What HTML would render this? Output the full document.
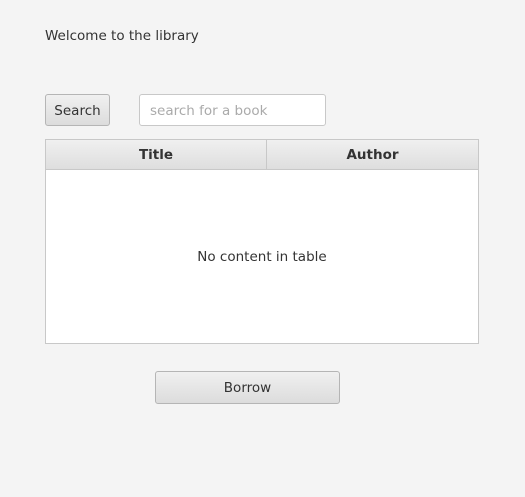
<!DOCTYPE html>
<html><head><style>
body{margin:0;width:525px;height:497px;background:#f4f4f4;font-family:"DejaVu Sans","Liberation Sans",sans-serif;font-size:13.5px;color:#333;position:relative;overflow:hidden}
.a{position:absolute}
.btn{box-sizing:border-box;border:1px solid #b5b5b5;border-radius:3px;background:linear-gradient(#f0f0f0,#dcdcdc);text-align:center;color:#333}
</style></head><body>
<div class="a" style="left:45px;top:28px">Welcome to the library</div>
<div class="a btn" style="left:45px;top:94px;width:65px;height:32px;line-height:32px">Search</div>
<div class="a" style="left:139px;top:94px;width:187px;height:32px;box-sizing:border-box;border:1px solid #c8c8c8;border-radius:3px;background:#fff;color:#aaa;line-height:32px;padding-left:10px">search for a book</div>
<div class="a" style="left:45px;top:139px;width:434px;height:205px;box-sizing:border-box;border:1px solid #c8c8c8;background:#fff">
<div class="a" style="left:0;top:0;width:221px;height:30px;box-sizing:border-box;border-right:1px solid #c8c8c8;border-bottom:1px solid #c8c8c8;background:linear-gradient(#f0f0f0,#dedede);text-align:center;line-height:31px;font-weight:bold">Title</div>
<div class="a" style="left:221px;top:0;width:211px;height:30px;box-sizing:border-box;border-bottom:1px solid #c8c8c8;background:linear-gradient(#f0f0f0,#dedede);text-align:center;line-height:31px;font-weight:bold">Author</div>
<div class="a" style="left:0;top:109px;width:432px;text-align:center">No content in table</div>
</div>
<div class="a btn" style="left:155px;top:371px;width:185px;height:33px;line-height:33px">Borrow</div>
</body></html>
